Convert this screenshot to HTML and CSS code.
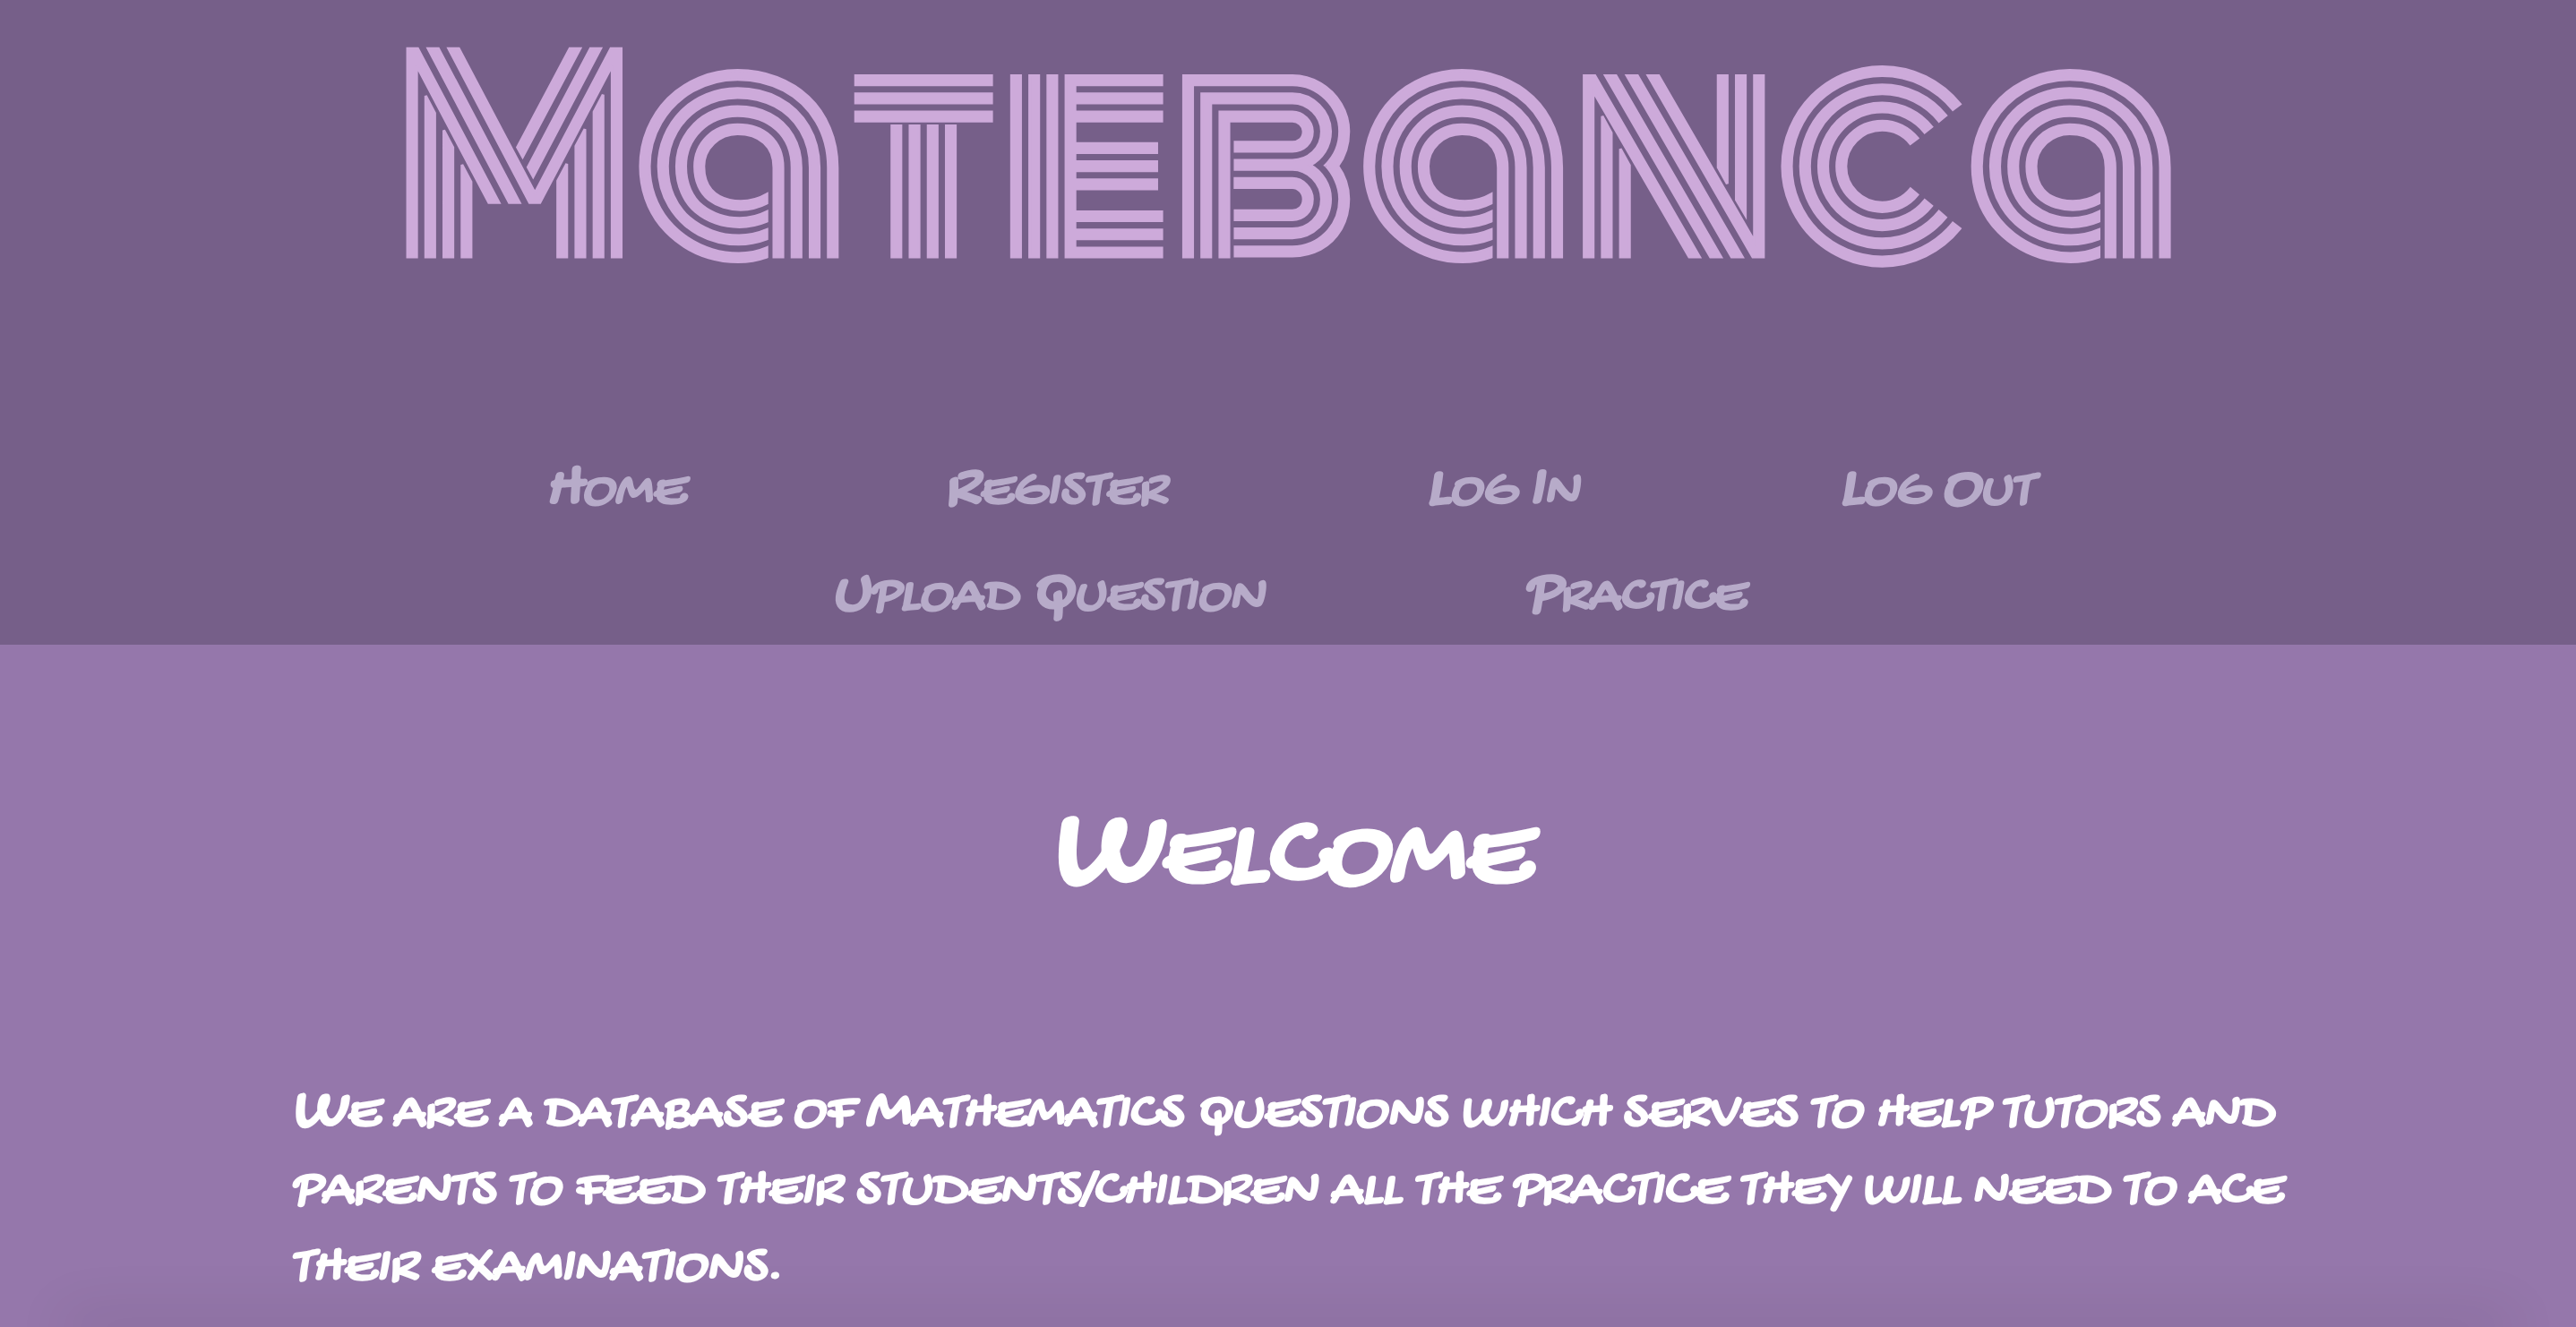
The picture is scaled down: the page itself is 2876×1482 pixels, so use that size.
FILE: index.html
```html
<!DOCTYPE html>
<html lang="en">
<head>
  <meta charset="utf-8">
  <title>Matebanca</title>
  <link rel="stylesheet" href="styles.css">
</head>
<body>
  <header class="site-header">
    <div class="logo">Matebanca</div>
    <nav class="site-nav">
      <a href="#"><span class="cap">H</span>ome</a>
      <a href="#"><span class="cap">R</span>egister</a>
      <a href="#"><span class="cap">L</span>og <span class="cap">I</span>n</a>
      <a href="#"><span class="cap">L</span>og <span class="cap">O</span>ut</a>
      <a href="#"><span class="cap">U</span>pload <span class="cap">Q</span>uestion</a>
      <a href="#"><span class="cap">P</span>ractice</a>
    </nav>
  </header>
  <main class="content">
    <h1><span class="cap">W</span>elcome</h1>
    <p><span class="cap">W</span>e are a database of <span class="cap">M</span>athematics questions which serves to help tutors and parents to feed their students/children all the practice they will need to ace their examinations.</p>
  </main>
  <div class="next-panel"></div>
</body>
</html>
```
FILE: styles.css
```css
* {
  box-sizing: border-box;
}

body {
  margin: 0;
  height: 100vh;
  overflow: hidden;
  display: flex;
  flex-direction: column;
  background: #9577ab;
  color: #fff;
  font-family: "Permanent Marker", "Gochi Hand", "Open Sans", sans-serif;
  font-size: 60px;
  font-weight: bold;
  font-style: italic;
}

.cap {
  font-size: 120%;
  line-height: 1;
}

.site-header {
  flex: none;
  background: #765f89;
  padding-bottom: 4px;
}

.logo {
  height: 502px;
  color: #cdaada;
  font-family: Monoton, Inter, sans-serif;
  font-size: 288px;
  font-weight: normal;
  font-style: normal;
  line-height: 358px;
  text-align: center;
  white-space: nowrap;
  -webkit-text-stroke: 3px #cdaada;
}

.site-nav {
  display: flex;
  flex-wrap: wrap;
  justify-content: center;
  gap: 22px 290px;
  padding: 0 15%;
  text-transform: uppercase;
}

.site-nav a {
  color: #b7abc9;
  text-decoration: none;
  line-height: 96px;
}

.content {
  flex: 1;
  padding: 0 11%;
  text-transform: uppercase;
}

h1 {
  margin: 152px 0 154px;
  font-size: 120px;
  line-height: 176px;
  text-align: center;
}

p {
  margin: 0;
  padding: 0 8px;
  line-height: 86px;
}

.next-panel {
  flex: none;
  height: 1px;
  margin: 0 80px -1px;
  box-shadow: 0 0 64px 10px rgba(0, 0, 0, 0.14);
}
```
